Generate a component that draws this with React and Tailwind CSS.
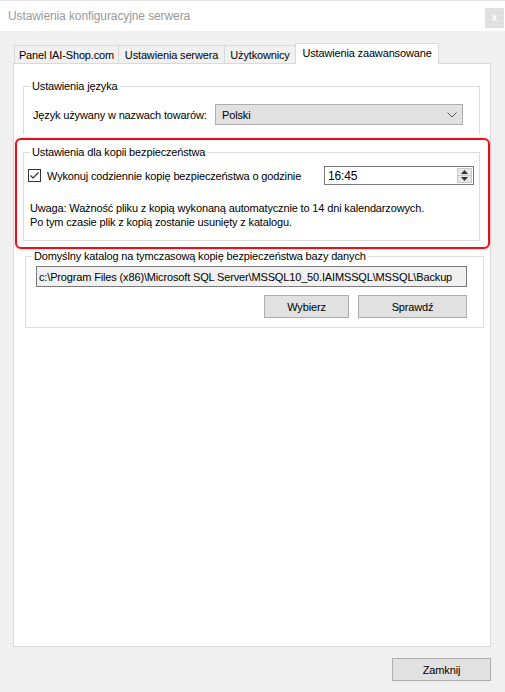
import React from "react";

const font = { fontFamily: '"Liberation Sans", Arial, sans-serif' };

const tabs = [
  { label: "Panel IAI-Shop.com", w: "w-[105px]" },
  { label: "Ustawienia serwera", w: "w-[107px]" },
  { label: "Użytkownicy", w: "w-[72px]" },
];

function CheckBox() {
  return (
    <svg width="13" height="13" viewBox="0 0 13 13" className="shrink-0">
      <rect x="0.5" y="0.5" width="12" height="12" fill="#fff" stroke="#333" />
      <path d="M2.5 6.5 L5 9 L10.5 3.5" fill="none" stroke="#333" strokeWidth="1.2" />
    </svg>
  );
}

function Spinner() {
  return (
    <div className="flex h-[15px] w-[15px] shrink-0 flex-col border border-[#c9c9c9] bg-[#e6e6e6]">
      <div className="flex flex-1 items-center justify-center border-b border-[#c9c9c9]">
        <svg width="7" height="4" viewBox="0 0 7 4">
          <path d="M0 4 L3.5 0 L7 4 Z" fill="#333" />
        </svg>
      </div>
      <div className="flex flex-1 items-center justify-center">
        <svg width="7" height="4" viewBox="0 0 7 4">
          <path d="M0 0 L3.5 4 L7 0 Z" fill="#333" />
        </svg>
      </div>
    </div>
  );
}

function Button({ children, w }) {
  return (
    <button className={`${w} h-[23px] shrink-0 border border-[#adadad] bg-[#e1e1e1] text-[11px] tracking-[-0.15px] text-black`}>
      {children}
    </button>
  );
}

export default function App() {
  return (
    <div style={font} className="flex h-[692px] w-[505px] flex-col bg-[#f0f0f0] text-[11px] leading-[14px] tracking-[-0.15px] text-black">
      {/* title bar */}
      <div className="flex h-[31px] items-start justify-between border-t border-[#e5e5e5] bg-white">
        <span className="mt-[8px] ml-[8px] text-[12px] tracking-[-0.1px] text-[#999]">Ustawienia konfiguracyjne serwera</span>
        <div className="mt-[7px] mr-[1px] flex h-[20px] w-[19px] items-center justify-center bg-[#e0e0e0] text-[10px] font-bold text-white">
          x
        </div>
      </div>

      <div className="flex-1 pt-[12px] pl-[13px]">
        {/* tabs */}
        <div className="flex h-[20px] items-end pl-[1px]">
          {tabs.map((t, i) => (
            <div
              key={t.label}
              className={`${t.w} ${i > 0 ? "-ml-px" : ""} flex h-[18px] shrink-0 items-center justify-center border border-b-0 border-[#d9d9d9] bg-[#f0f0f0] whitespace-nowrap`}
            >
              {t.label}
            </div>
          ))}
          <div className="relative z-10 -mb-px -ml-px flex h-[21px] w-[144px] shrink-0 items-center justify-center border border-b-0 border-[#d9d9d9] bg-white pb-[2px] whitespace-nowrap">
            Ustawienia zaawansowane
          </div>
        </div>

        {/* panel */}
        <div className="flex h-[584px] w-[478px] flex-col border border-[#d9d9d9] bg-white">
          <fieldset className="mt-[15px] ml-[9px] mr-[10px] h-[55px] border border-b-0 border-[#dcdcdc]">
            <legend className="ml-[6px] px-[2px]">Ustawienia języka</legend>
            <div className="flex items-center pt-[11px] pl-[9px]">
              <span className="whitespace-nowrap">Język używany w nazwach towarów:</span>
              <div className="ml-auto mr-[16px] flex h-[21px] w-[248px] shrink-0 items-center justify-between border border-[#adadad] bg-[#e1e1e1] pl-[6px] pr-[5px]">
                <span>Polski</span>
                <svg width="10" height="6" viewBox="0 0 10 6">
                  <path d="M0.5 0.5 L5 5 L9.5 0.5" fill="none" stroke="#555" strokeWidth="1" />
                </svg>
              </div>
            </div>
          </fieldset>

          <div className="relative mt-[11px] ml-[9px] mr-[10px]">
            <fieldset className="h-[96px] border border-[#dcdcdc]">
              <legend className="ml-[6px] px-[2px]">Ustawienia dla kopii bezpieczeństwa</legend>
              <div className="flex items-center pt-[7px] pl-[4px]">
                <CheckBox />
                <span className="ml-[6px] whitespace-nowrap">Wykonuj codziennie kopię bezpieczeństwa o godzinie</span>
                <div className="ml-auto mr-[5px] flex h-[19px] w-[150px] shrink-0 items-center justify-between border border-[#7a7a7a] pl-[3px] pr-[1px]">
                  <span className="text-[12px]">16:45</span>
                  <Spinner />
                </div>
              </div>
              <div className="mt-[16px] pl-[6px] whitespace-nowrap">
                <div>Uwaga: Ważność pliku z kopią wykonaną automatycznie to 14 dni kalendarzowych.</div>
                <div>Po tym czasie plik z kopią zostanie usunięty z katalogu.</div>
              </div>
            </fieldset>
            {/* highlight annotation */}
            <div className="pointer-events-none absolute -top-[7px] -bottom-[8px] -left-[8px] -right-[10px] rounded-[6px] border-2 border-[#e8101a] shadow-[0_0_2px_rgba(232,16,26,0.4)]" />
          </div>

          <fieldset className="mt-[8px] ml-[11px] mr-[6px] h-[79px] border border-[#dcdcdc]">
            <legend className="ml-[6px] px-[2px]">Domyślny katalog na tymczasową kopię bezpieczeństwa bazy danych</legend>
            <div className="flex flex-col pt-[3px] pl-[10px] pr-[16px]">
              <div className="flex h-[21px] min-w-0 items-center overflow-hidden border border-[#7a7a7a] bg-[#f0f0f0] pl-[2px] whitespace-nowrap">
                c:\Program Files (x86)\Microsoft SQL Server\MSSQL10_50.IAIMSSQL\MSSQL\Backup
              </div>
              <div className="mt-[8px] flex justify-end gap-[9px]">
                <Button w="w-[85px]">Wybierz</Button>
                <Button w="w-[109px]">Sprawdź</Button>
              </div>
            </div>
          </fieldset>
        </div>

        <div className="mt-[11px] flex w-[478px] justify-end">
          <Button w="w-[99px]">Zamknij</Button>
        </div>
      </div>
    </div>
  );
}
